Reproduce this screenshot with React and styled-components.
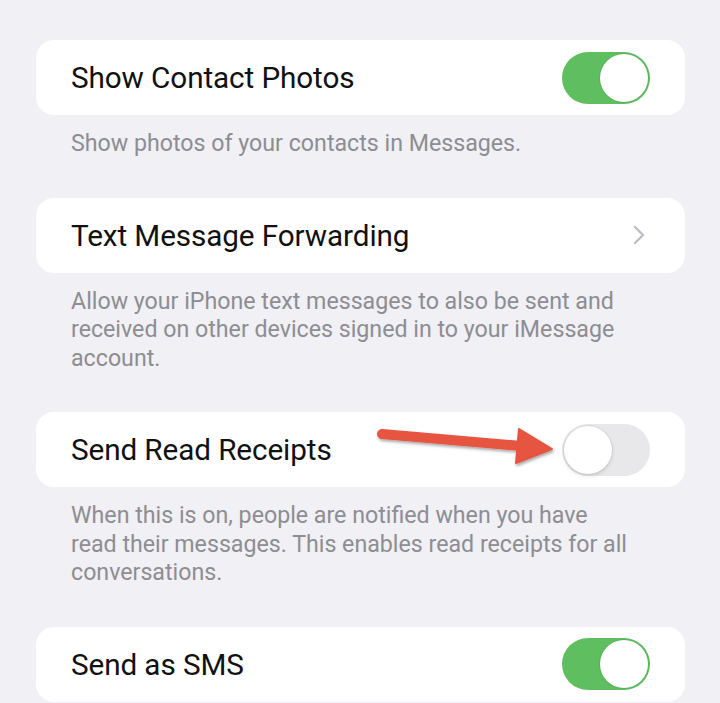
import React from "react";
import styled, { createGlobalStyle } from "styled-components";

const Global = createGlobalStyle`
  html, body { margin: 0; padding: 0; background: #f0f0f5; }
  body { font-family: Roboto, "Liberation Sans", sans-serif; -webkit-font-smoothing: antialiased; }
`;

const Page = styled.div`
  width: 720px;
  height: 703px;
  overflow: hidden;
  box-sizing: border-box;
  padding: 40px 35px 0 36px;
  background: #f0f0f5;
`;

const Card = styled.div`
  position: relative;
  height: 75px;
  background: #ffffff;
  border-radius: 18px;
  display: flex;
  align-items: center;
  justify-content: space-between;
  padding: 0 35px 0 35px;
  box-sizing: border-box;
`;

const Label = styled.span`
  font-size: 29.7px;
  color: #111111;
  letter-spacing: -0.1px;
`;

const Footer = styled.p`
  margin: 0;
  padding: 14px 52px 40px 35px;
  font-size: 23.2px;
  line-height: 28.5px;
  color: #8d8d92;
`;

const Track = styled.div`
  position: relative;
  width: 88px;
  height: 52px;
  border-radius: 26px;
  background: ${(p) => (p.$on ? "#5fbf60" : "#e8e8ea")};
  flex: none;
`;

const Knob = styled.div`
  position: absolute;
  top: 2px;
  ${(p) => (p.$on ? "right: 2px;" : "left: 2px;")}
  width: 48px;
  height: 48px;
  border-radius: 50%;
  background: #ffffff;
  box-shadow: ${(p) =>
    p.$on
      ? "0 0 0 1px rgba(80,170,80,0.6)"
      : "0 0 0 1px rgba(0,0,0,0.06), 0 2px 4px rgba(0,0,0,0.12)"};
`;

const Chevron = styled.svg`
  width: 12px;
  height: 20px;
  margin-right: 5px;
  flex: none;
`;

const Arrow = styled.svg`
  position: absolute;
  left: 0;
  top: 0;
  width: 560px;
  height: 75px;
  overflow: visible;
  pointer-events: none;
`;

function Toggle({ on }) {
  return (
    <Track $on={on}>
      <Knob $on={on} />
    </Track>
  );
}

export default function App() {
  return (
    <>
      <Global />
      <Page>
        <Card>
          <Label>Show Contact Photos</Label>
          <Toggle on />
        </Card>
        <Footer>Show photos of your contacts in Messages.</Footer>

        <Card>
          <Label>Text Message Forwarding</Label>
          <Chevron viewBox="0 0 12 20">
            <path d="M2 2 L10 10 L2 18" fill="none" stroke="#bdbdc2" strokeWidth="2.4" strokeLinecap="round" strokeLinejoin="round" />
          </Chevron>
        </Card>
        <Footer>
          Allow your iPhone text messages to also be sent and received on other devices signed in to your iMessage account.
        </Footer>

        <Card>
          <Label>Send Read Receipts</Label>
          <Toggle on={false} />
          <Arrow viewBox="0 0 560 75">
            <defs>
              <filter id="sh" x="-10%" y="-50%" width="120%" height="200%">
                <feDropShadow dx="1" dy="2" stdDeviation="1.6" floodColor="#000" floodOpacity="0.35" />
              </filter>
            </defs>
            <g filter="url(#sh)">
              <line x1="346" y1="22" x2="486" y2="34" stroke="#e5543f" strokeWidth="10" strokeLinecap="round" />
              <polygon points="483,17 516,37 480,51" fill="#e5543f" strokeLinejoin="round" stroke="#e5543f" strokeWidth="2" />
            </g>
          </Arrow>
        </Card>
        <Footer>
          When this is on, people are notified when you have read their messages. This enables read receipts for all conversations.
        </Footer>

        <Card>
          <Label>Send as SMS</Label>
          <Toggle on />
        </Card>
      </Page>
    </>
  );
}
